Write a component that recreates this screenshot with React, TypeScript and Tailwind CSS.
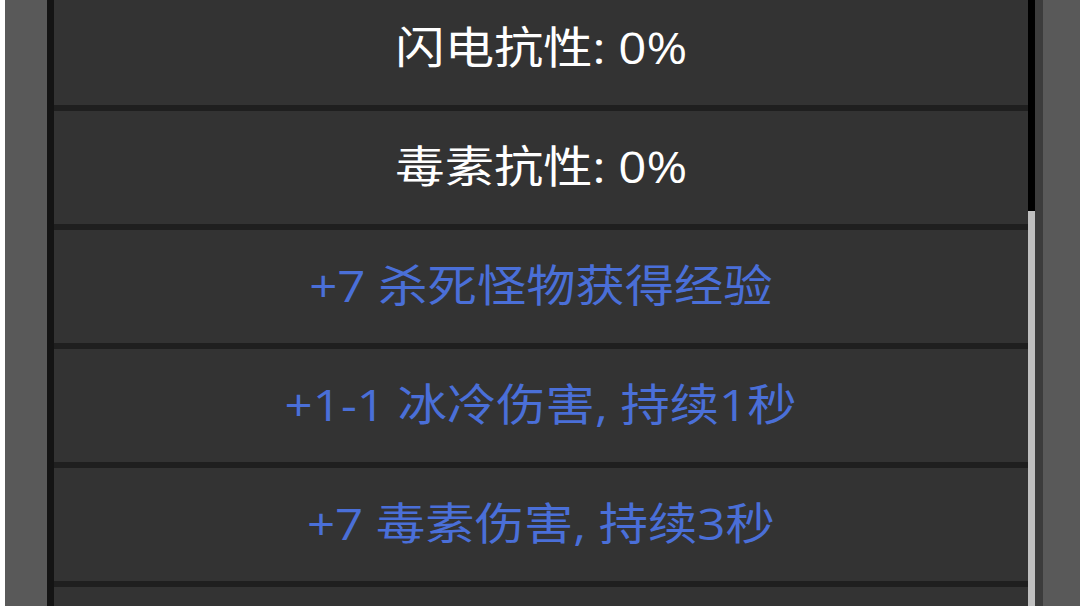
const rows = [
  { text: "闪电抗性: 0%", magic: false },
  { text: "毒素抗性: 0%", magic: false },
  { text: "+7 杀死怪物获得经验", magic: true },
  { text: "+1-1 冰冷伤害, 持续1秒", magic: true },
  { text: "+7 毒素伤害, 持续3秒", magic: true },
  { text: "", magic: false },
];

export default function App() {
  return (
    <div
      className="flex h-[606px] w-[1080px] overflow-hidden bg-white"
      style={{ fontFamily: '"Open Sans", "Noto Sans CJK SC", sans-serif' }}
    >
      <div className="ml-[5px] w-[42px] shrink-0 bg-[#595959]" />
      <div className="w-[7px] shrink-0 bg-[#141414]" />
      <div className="min-w-0 flex-1 overflow-hidden bg-[#1e1e1e]">
        <div className="-mt-[8px] flex flex-col">
          {rows.map((r, i) => (
            <div
              key={i}
              className="flex h-[119px] shrink-0 items-center justify-center border-b-[6px] border-[#1f1f1f] bg-[#333333] pb-[3px]"
            >
              <span
                className={`inline-block scale-x-[1.12] whitespace-nowrap text-[44px] leading-none ${
                  r.magic ? "text-[#4a6fd8]" : "text-white"
                }`}
              >
                {r.text}
              </span>
            </div>
          ))}
        </div>
      </div>
      <div className="flex w-[7px] shrink-0 flex-col bg-black">
        <div className="h-[211px]" />
        <div className="flex-1 bg-[#c0c0c0]" />
      </div>
      <div className="w-[8px] shrink-0 bg-[#3c3c3c]" />
      <div className="w-[37px] shrink-0 bg-[#595959]" />
    </div>
  );
}
